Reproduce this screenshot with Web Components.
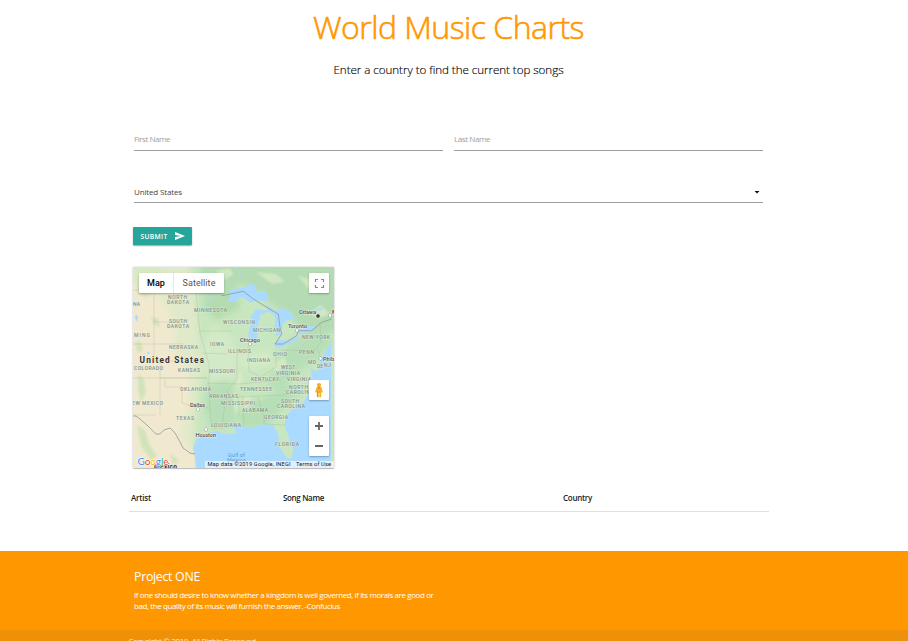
<!DOCTYPE html>
<html lang="en">
<head>
<meta charset="utf-8">
<title>World Music Charts</title>
<style>
html,body{margin:0;height:641px;overflow:hidden;background:#fff}
body{font-family:"Open Sans","Noto Sans",sans-serif;font-size:8px;color:rgba(0,0,0,.87)}
</style>
</head>
<body>
<music-page></music-page>
<script>
const define = (name, html, setup) => customElements.define(name, class extends HTMLElement {
  connectedCallback() {
    if (this.shadowRoot) return;
    this.attachShadow({mode: 'open'}).innerHTML = html;
    if (setup) setup(this, this.shadowRoot);
  }
});

/* Text tracked so that its line has the given width. */
define('fit-text', `<style>:host{display:inline-block;white-space:nowrap}</style><slot></slot>`, el => {
  const want = +el.getAttribute('w');
  const have = el.getBoundingClientRect().width;
  el.style.letterSpacing = (want - have) / el.textContent.length + 'px';
});

define('page-header', `<style>
:host{display:block;text-align:center;padding-right:11px;height:128px}
h1{margin:0;font-size:32px;line-height:53px;font-weight:300;color:#ff9800;-webkit-text-stroke:.6px #ff9800}
p{margin:0;font-size:11.6px;line-height:33px;font-weight:300;color:#000;-webkit-text-stroke:.15px #000}
</style><h1><fit-text w="271">World Music Charts</fit-text></h1><p><fit-text w="230">Enter a country to find the current top songs</fit-text></p>`);

define('text-field', `<style>
:host{display:flex;align-items:center;box-sizing:border-box;flex:1;height:23px;padding-bottom:1px;border-bottom:1px solid #9e9e9e;color:#9e9e9e}
</style><slot></slot>`);

define('country-select', `<style>
:host{display:flex;align-items:center;justify-content:space-between;box-sizing:border-box;height:21px;margin-top:31px;padding:0 3px 1px 0;border-bottom:1px solid #9e9e9e;color:#444}
svg{display:block}
</style><slot></slot><svg width="6" height="4" viewBox="0 0 6 4"><path d="M.5 1h5L3 3.6z" fill="#111"/></svg>`);

define('submit-button', `<style>
:host{display:flex;align-items:center;box-sizing:border-box;width:59px;height:18px;margin:24px 0 0 -1px;padding-left:7.5px;gap:7px;border-radius:1px;background:#26a69a;color:#fff;font-size:6.7px;font-weight:600;box-shadow:0 1px 1px rgba(0,0,0,.2),0 1px 2px rgba(0,0,0,.2)}
</style><slot></slot><svg width="10" height="8" viewBox="0 0 10 8"><path d="M0 0L10 4 0 8V5.1L6 4 0 2.9z" fill="#fff"/></svg>`);

const labels = [
 ['NORTH',168,299,19],['DAKOTA',167,304,22],['MINNESOTA',194,312,33],['SOUTH',169,323,18],['DAKOTA',167,328,22],
 ['MING',134,337,16],['NA',133,306,7],['NEBRASKA',169,349,29],['IOWA',210,346,14],['WISCONSIN',223,324,32],
 ['MICHIGAN',253,332,27],['ILLINOIS',228,353,23],['INDIANA',247,362,23],['OHIO',273,356,14],['PENN',299,354,15],
 ['NEW YORK',302,339,28],['COLORADO',134,370,29],['KANSAS',178,372,22],['MISSOURI',209,373,26],['WEST',281,369,14],
 ['VIRGINIA',276,375,24],['KENTUCKY',251,381,28],['VIRGINIA',287,381,24],['MD',308,364,8],['DE',317,368,6],['NJ',324,367,7],
 ['OKLAHOMA',180,391,31],['ARKANSAS',209,398,29],['TENNESSEE',240,391,32],['NORTH',289,389,19],['CAROLINA',286,394,28],
 ['NEW MEXICO',128,405,35],['MISSISSIPPI',221,405,34],['ALABAMA',242,412,26],['SOUTH',281,403,18],['CAROLINA',277,408,28],
 ['GEORGIA',264,419,24],['TEXAS',176,420,18],['LOUISIANA',211,427,30],['FLORIDA',275,446,24]
].map(([t,x,y,w]) => `<text x="${x}" y="${y}" textLength="${w}">${t}</text>`).join('');

const city = (t,x,y,w,cx,cy) => `<text x="${x}" y="${y}" textLength="${w}">${t}</text><circle cx="${cx}" cy="${cy}" r="1.4" fill="#fff" stroke="#555" stroke-width=".8"/>`;

define('map-canvas', `<style>
:host{display:block;width:201px;height:201px;overflow:hidden;border-radius:1px}
svg{display:block;font-family:Roboto,sans-serif}
</style><svg width="201" height="201" viewBox="133 267 201 201">
<defs><filter id="s"><feGaussianBlur stdDeviation="3"/></filter><filter id="t"><feGaussianBlur stdDeviation="1"/></filter></defs>
<path fill="#c8e6bf" d="M133 267h202v202H133z"/>
<g filter="url(#s)">
<path fill="#e0e9c9" d="M125 260h62l8 30 4 50 3 35-6 40-4 60h-70z"/>
<path fill="#f1e9cf" d="M125 275h28l8 25 14 20 0 30 15 25-2 30-8 30 18 20 0 30h-73z"/>
<path fill="#d5e9c3" d="M133 262h25l8 22-12 10-20-10z"/>
<path fill="#b4dbb3" d="M200 255h145v75l-40 6-15-20-18-12-28-20-44 12z"/>
<path fill="#d6ebc8" d="M212 325l18 10 8 25-5 20-22 5-12-28z" opacity=".8"/>
<path fill="#b7dfb7" d="M207 385l22-6 8 20-3 28-22 3-8-22zM290 340l30-10 14 12-20 20-20 12-8 15-20-2 12-25z"/>
<path fill="#b6dfb5" d="M270 395l15-10 15 10-20 15-10 15-25 6-12-20z"/>
<path fill="#d3eac6" d="M238 353l32-2 4 16-34 3z"/>
<path fill="#b4dcb0" d="M210 288l26 0 4 20-24 12-14-14z"/>
</g>
<g filter="url(#t)" fill="#cbe2b6" opacity=".8"><path d="M138 280l5-7 3 12 7 8-6 4-10-3zM135 343l5-2 3 9-5 3zM138 374l6 5 2 14-5 9-3-12zM151 317l7 2 2 8-7-3zM137 425l8 5 4 14 8 12-6 4-10-14zM170 452l9 10-6 3z"/><path fill="#d8ebc6" d="M216 271l13-3 5 6-10 6zM256 272l20 2 9 8-13 2zM298 276l16 4 8 11-9 3zM240 399l8-4 6 7-12 11zM273 364l12-7 2 8-11 8zM309 313l12-8 9 9-12 5zM236 376l5-6 3 8-7 14zM233 394l4-3 1 18-3 8z"/></g>
<g fill="none" stroke="#97aa8d" stroke-width=".5" opacity=".5"><path d="M133 290h50M154 293v29h33M154 322v22h29M133 344h21M154 344v17h45M160 361v17h47M133 378h74M160 378v37M133 415h23M165 379v8h17v16l12 4 16 1M194 273l2 20 4 40 9 31v28l2 29 4 8M199 331h32M202 353l25 1M207 383l32 1 42-4M237 348v31l-9 11-4 21-2 18M248 346l1 25 12 6 15-10v-18M238 397l47-2M243 397l1 34M258 397l6 21v10M264 424l21 1 3-8M285 394l16-2 18-5M279 350h36l6-8-1-20M318 350l5 18-8 5"/></g>
<g transform="translate(230 366) scale(.333333)">
<path fill="#aadaff" d="M-101 325l-5-60-5-20 10-25 30-15 25-10 40 10 25-4-5-14-18-8 34-1 30 9 40-12 30 3 15 27 5 40 20 30 15 3 5-28-15-40-10-30 2-30 23-25 32-18 16-32-2-26 10-18-5-24 23 10 9-38 30-50V325z"/>
</g>
<g transform="translate(230 262) scale(.333333)" fill="#aadaff">
<path d="M-8 124l10-24-2-16 20-4 25-5 17-10 18 8-2 14 30 0 7 22-7 10-22-4-26 7-12-10-17-7-14 14-13-3z"/>
<path d="M60 169l13-21 12-8 20 6 12-8 9 12-16 1-18 7-8 32-1 35-8 15-15 1-5-21 6-28 8-22z"/>
<path d="M105 128l20 8 7 12 23-11 28 13 10 25-21-1-14 12-4 31-16 6-4-28 1-28-16-22z"/>
<path d="M134 243l14-9 30 2 31-15-1 11-36 15-25 12-13-5zM203 204l35-12 18 1-9 15-40 9zM250 147l25-12 5 5-27 10zM-57 50l7-11 7 7-3 13zM15 20l7-9 3 8z"/>
</g>
<path d="M136 314l2 3-1 5-2-4zM142 283l2-3 1 4zM164 274l4 2-2 3zM147 351l3 2-2 2zM218 273l3 3-3 1zM239 272l3 4-3 1zM209 295l3 4-2 2z" fill="#aadaff"/>
<path d="M133 416h3l4 3 8 7 8 8h4l4-4 6-2 5 5 5 9 3 6 7 5 5 1M221.700 295.700l8.300-1.700 13.300-2.700 10 7.700 13.400 8.300 11.600 6.700 1.700 13.300 1.700 6.700-6.700 10h8.300l13.400-8.300 1.600-5h13.400l10-8.400 10-3.300" fill="none" stroke="#8d9a96" stroke-width=".8"/>
<g fill="#849088" stroke="#e8f2e2" stroke-width=".9" stroke-opacity=".6" paint-order="stroke" font-size="5" font-weight="500">${labels}</g>
<g fill="#4a4a4a" stroke="#eef5e8" stroke-width="1" stroke-opacity=".8" paint-order="stroke" font-size="5.8" font-weight="500">
${city('Ottawa',299,313.5,17,318,316)}${city('Toronto',288,327.5,19,297,330.5)}${city('Chicago',240,341.5,20,250,344)}${city('Dallas',190,407,15,198,409.5)}${city('Houston',195.5,436.5,20.5,206,429.5)}${city('Phila',323,360.5,12,320.5,358.5)}${city('M',332,313.5,5,330,315.5)}
<circle cx="318" cy="316" r="1.7" fill="#333" stroke="none"/></g>
<text x="139.5" y="363" textLength="64.5" font-size="8.3" font-weight="700" fill="#333" stroke="#f6f2dd" stroke-width="1" paint-order="stroke">United States</text>
<g font-size="5.5" fill="#5b9bd0"><text x="228" y="457" textLength="17">Gulf of</text><text x="227" y="462" textLength="19">Mexico</text></g>
<text x="154" y="468.500" textLength="23" font-size="6.5" font-weight="700" fill="#333">Mexico</text>
<g font-family="Lato,sans-serif" font-size="10" font-weight="400" stroke="#fff" stroke-width="1" paint-order="stroke"><text x="137.5" y="464.500" textLength="31"><tspan fill="#4285f4">G</tspan><tspan fill="#ea4335">o</tspan><tspan fill="#fbbc05">o</tspan><tspan fill="#4285f4">g</tspan><tspan fill="#34a853">l</tspan><tspan fill="#ea4335">e</tspan></text></g>
<path d="M205 461h130v8H205z" fill="#f5f5f5" opacity=".75"/>
<g font-size="5.7" fill="#222"><text x="207.5" y="466.2" textLength="83">Map data ©2019 Google, INEGI</text><text x="296" y="466.2" textLength="35">Terms of Use</text></g>
</svg>`);

define('map-controls', `<style>
:host{position:absolute;inset:0;font-family:Roboto,sans-serif}
div{position:absolute;background:#fff;border-radius:1px;box-shadow:0 1px 2px rgba(0,0,0,.3)}
.type{left:6px;top:6px;width:85px;height:20px;display:flex;align-items:center;font-size:9px;color:#565656}
.type span{box-sizing:border-box;text-align:center}
.type span:first-child{width:35px;color:#000;font-weight:500;border-right:1px solid #e8e8e8;line-height:20px}
.type span:last-child{width:50px}
.full{left:176px;top:6px;width:20px;height:20px}
.man{left:176px;top:113px;width:20px;height:20px}
.zoom{left:176px;top:149px;width:20px;height:40px}
svg{display:block}
</style>
<div class="type"><span><fit-text w="18">Map</fit-text></span><span><fit-text w="33">Satellite</fit-text></span></div>
<div class="full"><svg width="20" height="20"><path d="M6.500 9V6.500H9M12 6.500h2.500V9M14.500 12v2.500H12M9 14.500H6.500V12" fill="none" stroke="#8a8a8a" stroke-width="1.2"/></svg></div>
<div class="man"><svg width="20" height="20"><path d="M7.500 7.200h5l1.400 5-1.300.5-.5-2v6.600h-1.700V13h-.8v4.300H7.900v-6.600l-.5 2-1.300-.5z" fill="#f5b126"/><circle cx="10" cy="5.100" r="2.200" fill="#f5b126"/><path d="M8.200 7h3.600l-1.800 2zM8.200 11h1v6h-1z" fill="#d99022"/></svg></div>
<div class="zoom"><svg width="20" height="40"><path d="M6 10h8M10 6v8M6 30h8" stroke="#666" stroke-width="1.800"/></svg></div>`);

define('map-card', `<style>
:host{display:block;position:relative;width:201px;height:201px;margin:22px 0 0 -1px;border-radius:1px;box-shadow:0 1px 1px rgba(0,0,0,.22),0 0 2px rgba(0,0,0,.25)}
</style><map-canvas></map-canvas><map-controls></map-controls>`);

define('chart-head', `<style>
:host{display:grid;grid-template-columns:152px 280px 1fr;align-items:center;justify-items:start;box-sizing:border-box;width:640px;height:27px;margin:17px 0 0 129px;padding:0 0 1px 2px;border-bottom:1px solid #e0e0e0;font-weight:600;color:#222}
</style><fit-text w="20">Artist</fit-text><fit-text w="41">Song Name</fit-text><fit-text w="29">Country</fit-text>`);

define('page-footer', `<style>
:host{display:block;margin-top:39px;background:#ff9800;color:#fff}
section{box-sizing:border-box;height:79px;padding:17px 0 0 134px}
h5{margin:0 0 4px;font-size:12.4px;line-height:17px;font-weight:400;height:17px}
p{margin:0;line-height:11px}
p fit-text,h5 fit-text{display:block;width:max-content}
footer{height:11px;overflow:hidden;padding-left:128.5px;background:#ef9108;line-height:22px;color:rgba(255,255,255,.8)}
</style><section><h5><fit-text w="66">Project ONE</fit-text></h5><p><fit-text w="299.500">If one should desire to know whether a kingdom is well governed, if its morals are good or</fit-text><fit-text w="206">bad, the quality of its music will furnish the answer. -Confucius</fit-text></p></section><footer><fit-text w="129">Copyright © 2019. All Rights Reserved.</fit-text></footer>`);

define('music-page', `<style>
:host{display:block;height:641px;overflow:hidden}
main{width:629px;margin-left:134px}
.names{display:flex;gap:11px}
</style><page-header></page-header>
<main><div class="names"><text-field><fit-text w="36">First Name</fit-text></text-field><text-field><fit-text w="36">Last Name</fit-text></text-field></div>
<country-select><fit-text w="48">United States</fit-text></country-select>
<submit-button><fit-text w="27">SUBMIT</fit-text></submit-button>
<map-card></map-card></main>
<chart-head></chart-head><page-footer></page-footer>`);
</script>
</body>
</html>
